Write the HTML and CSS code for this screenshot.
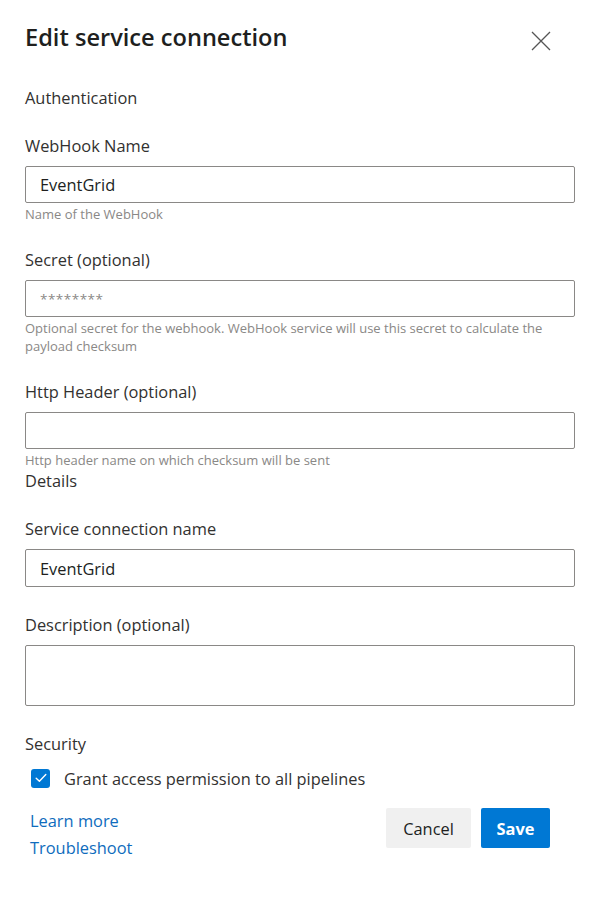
FILE: index.html
```html
<!DOCTYPE html>
<html lang="en">
<head>
<meta charset="utf-8">
<title>Edit service connection</title>
<link rel="stylesheet" href="styles.css">
</head>
<body>
<div class="panel">
  <div class="header">
    <h1 class="title">Edit service connection</h1>
    <button class="close" aria-label="Close">
      <svg width="20" height="20" viewBox="0 0 20 20"><path d="M1 1 L19 19 M19 1 L1 19" stroke="#555" stroke-width="1.3" fill="none"/></svg>
    </button>
  </div>

  <div class="section first">Authentication</div>

  <div class="field">
    <label class="label">WebHook Name</label>
    <div class="input"><span class="value">EventGrid</span></div>
    <div class="help">Name of the WebHook</div>
  </div>

  <div class="field">
    <label class="label">Secret (optional)</label>
    <div class="input"><span class="placeholder">********</span></div>
    <div class="help">Optional secret for the webhook. WebHook service will use this secret to calculate the payload checksum</div>
  </div>

  <div class="field last">
    <label class="label">Http Header (optional)</label>
    <div class="input"></div>
    <div class="help">Http header name on which checksum will be sent</div>
  </div>

  <div class="section details">Details</div>

  <div class="field wide">
    <label class="label">Service connection name</label>
    <div class="input tall"><span class="value">EventGrid</span></div>
  </div>

  <div class="field wide">
    <label class="label">Description (optional)</label>
    <div class="input textarea"></div>
  </div>

  <div class="section">Security</div>
  <div class="check-row">
    <span class="checkbox">
      <svg width="12" height="10" viewBox="0 0 12 10"><path d="M1.2 5.2 L4.4 8.2 L10.8 1.6" stroke="#fff" stroke-width="1.4" fill="none" stroke-linecap="round" stroke-linejoin="round"/></svg>
    </span>
    <span class="check-label">Grant access permission to all pipelines</span>
  </div>

  <div class="footer">
    <div class="links">
      <a class="link" href="#">Learn more</a>
      <a class="link" href="#">Troubleshoot</a>
    </div>
    <div class="buttons">
      <button class="btn cancel">Cancel</button>
      <button class="btn save">Save</button>
    </div>
  </div>
</div>
</body>
</html>
```

FILE: styles.css
```css
* { box-sizing: border-box; }
html, body { margin: 0; padding: 0; background: #fff; }
body {
  font-family: "Open Sans", "Noto Sans", "Liberation Sans", sans-serif;
  color: #323130;
  width: 597px;
  height: 901px;
  overflow: hidden;
}
.panel {
  padding: 21px 22px 0 25px;
}
.header {
  display: flex;
  justify-content: space-between;
  align-items: flex-start;
  height: 32px;
}
.title {
  margin: 0;
  font-size: 23.6px;
  font-weight: 600;
  line-height: 32px;
  color: #201f1e;
  letter-spacing: 0;
}
.close {
  border: 0;
  background: none;
  padding: 0;
  margin: 10px 24px 0 0;
  width: 20px;
  height: 20px;
  display: flex;
}
.section {
  font-size: 16.4px;
  line-height: 20px;
  color: #323130;
  margin-bottom: 28px;
}
.section.first { margin-top: 35px; }
.section.details { margin-top: 2px; }
.field { margin-bottom: 27px; }
.field.wide { margin-bottom: 28px; }
.field.last { margin-bottom: 0; }
.label {
  display: block;
  font-size: 16.4px;
  line-height: 20px;
  margin-bottom: 10px;
  color: #323130;
}
.input {
  height: 37px;
  border: 1px solid #8a8886;
  border-radius: 2px;
  padding: 0 14px;
  display: flex;
  align-items: center;
}
.input.tall { height: 38px; }
.input.textarea { height: 61px; }
.value { font-size: 16.4px; color: #201f1e; }
.placeholder { font-size: 13.5px; color: #8a8886; letter-spacing: 0.5px; }
.help {
  margin-top: 2px;
  font-size: 13px;
  line-height: 18px;
  color: #8a8886;
}
.check-row {
  display: flex;
  align-items: center;
  margin-top: -14px;
  padding-left: 6px;
  height: 20px;
}
.checkbox {
  width: 19px;
  height: 19px;
  border-radius: 3px;
  background: #0078d4;
  display: flex;
  align-items: center;
  justify-content: center;
}
.check-label {
  margin-left: 14px;
  font-size: 16.4px;
  color: #323130;
}
.footer {
  display: flex;
  justify-content: space-between;
  align-items: flex-start;
  margin-top: 19px;
  padding-right: 25px;
}
.links {
  display: flex;
  flex-direction: column;
  padding-left: 5px;
}
.link {
  font-size: 16.4px;
  line-height: 27px;
  color: #0f6cbd;
  text-decoration: none;
}
.buttons {
  display: flex;
  gap: 10px;
  padding-top: 1px;
}
.btn {
  height: 40px;
  border: 0;
  border-radius: 2px;
  font-family: inherit;
  font-size: 16.4px;
  padding: 0;
}
.cancel { background: #f0f0f0; color: #201f1e; width: 85px; }
.save { background: #0078d4; color: #fff; font-weight: 700; width: 69px; }
```
